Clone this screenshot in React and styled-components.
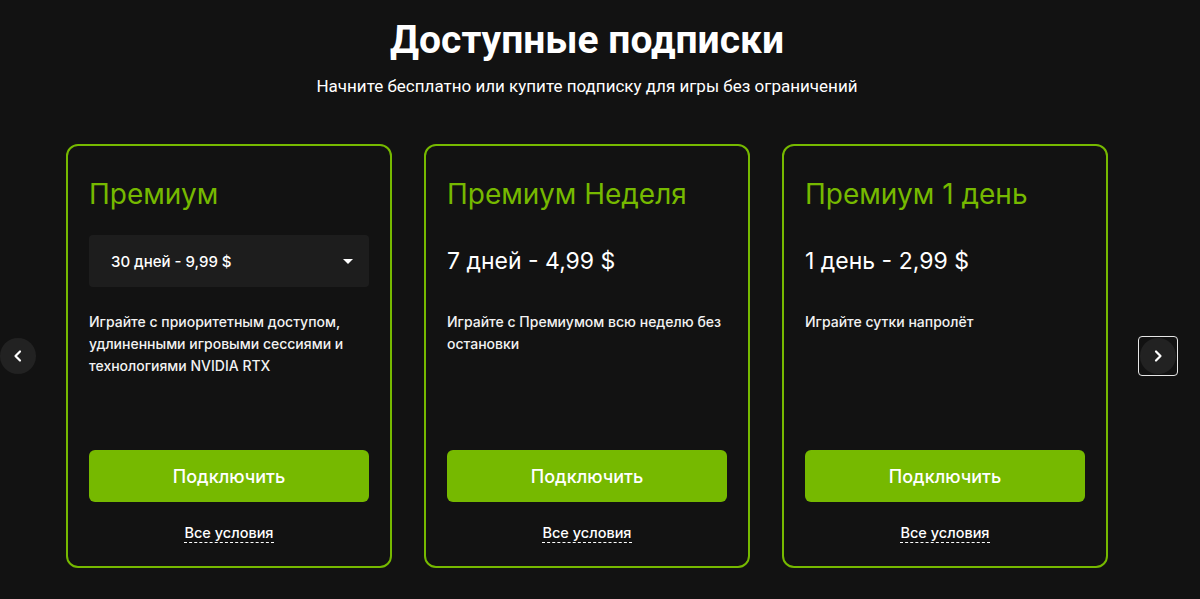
import React, { useState } from "react";
import styled, { createGlobalStyle } from "styled-components";

const GlobalStyle = createGlobalStyle`
  html, body {
    margin: 0;
    padding: 0;
    background: #121212;
  }
  body {
    font-family: Inter, "Noto Sans", "Liberation Sans", sans-serif;
    color: #fff;
  }
`;

const Page = styled.div`
  display: grid;
  grid-template-columns: 36px 1042px 40px;
  grid-template-rows: auto auto;
  align-content: start;
  align-items: center;
  column-gap: 30px;
  padding-top: 18px;
  height: 599px;
  box-sizing: border-box;
`;

const Header = styled.header`
  grid-column: 2;
  grid-row: 1;
  text-align: center;
  margin-bottom: 47px;
`;

const Title = styled.h2`
  margin: 0;
  font-family: Roboto, "Liberation Sans", sans-serif;
  font-weight: 700;
  font-size: 39px;
  line-height: 44px;
`;

const Subtitle = styled.p`
  margin: 13px 0 0;
  font-family: Roboto, "Liberation Sans", sans-serif;
  font-size: 17px;
  line-height: 22px;
`;

const Cards = styled.div`
  grid-column: 2;
  grid-row: 2;
  display: grid;
  grid-template-columns: repeat(3, 326px);
  gap: 32px;
`;

const Card = styled.div`
  display: flex;
  flex-direction: column;
  height: 424px;
  box-sizing: border-box;
  border: 2px solid #76b900;
  border-radius: 12px;
  padding: 30px 21px 23px;
`;

const PlanName = styled.h3`
  margin: 0;
  color: #76b900;
  font-weight: 400;
  font-size: 28px;
  line-height: 36px;
`;

const Select = styled.button`
  display: flex;
  align-items: center;
  justify-content: space-between;
  margin-top: 23px;
  height: 52px;
  padding: 0 16px 0 22px;
  background: #1d1d1d;
  border: none;
  border-radius: 4px;
  color: #fff;
  font-family: inherit;
  font-size: 15px;
  font-weight: 500;
  cursor: pointer;
`;

const Caret = styled.span`
  width: 0;
  height: 0;
  border-left: 5px solid transparent;
  border-right: 5px solid transparent;
  border-top: 5px solid #fff;
`;

const Price = styled.div`
  display: flex;
  align-items: center;
  margin-top: 23px;
  height: 52px;
  font-size: 23px;
  font-weight: 400;
`;

const Description = styled.p`
  flex: 1;
  margin: 24px 0 0;
  font-size: 14px;
  font-weight: 500;
  line-height: 22px;
  color: #f2f2f2;
`;

const ConnectButton = styled.button`
  height: 52px;
  border: none;
  border-radius: 6px;
  background: #76b900;
  color: #fff;
  font-family: inherit;
  font-size: 18px;
  font-weight: 500;
  cursor: pointer;
`;

const Terms = styled.a`
  align-self: center;
  margin-top: 22px;
  font-size: 14.5px;
  font-weight: 500;
  line-height: 18px;
  color: #fff;
  text-decoration: none;
  border-bottom: 1px dashed #fff;
  cursor: pointer;
`;

const ArrowButton = styled.button`
  grid-row: 2;
  grid-column: ${(props) => props.$col};
  display: flex;
  align-items: center;
  justify-content: center;
  width: ${(props) => (props.$focused ? "40px" : "36px")};
  height: ${(props) => (props.$focused ? "40px" : "36px")};
  padding: 0;
  background: transparent;
  border: ${(props) => (props.$focused ? "1.5px solid #e6e6e6" : "none")};
  border-radius: 4px;
  cursor: pointer;
`;

const ArrowCircle = styled.span`
  display: flex;
  align-items: center;
  justify-content: center;
  width: 36px;
  height: 36px;
  border-radius: 50%;
  background: #222;
`;

const Chevron = ({ dir }) => (
  <svg width="14" height="14" viewBox="0 0 14 14" fill="none">
    <path
      d={dir === "left" ? "M9 2.5 L4.5 7 L9 11.5" : "M5 2.5 L9.5 7 L5 11.5"}
      stroke="#fff"
      strokeWidth="2.2"
      strokeLinecap="round"
      strokeLinejoin="round"
    />
  </svg>
);

const plans = [
  {
    name: "Премиум",
    options: ["30 дней - 9,99 $"],
    text: "Играйте с приоритетным доступом, удлиненными игровыми сессиями и технологиями NVIDIA RTX",
  },
  {
    name: "Премиум Неделя",
    price: "7 дней - 4,99 $",
    text: "Играйте с Премиумом всю неделю без остановки",
  },
  {
    name: "Премиум 1 день",
    price: "1 день - 2,99 $",
    text: "Играйте сутки напролёт",
  },
];

function App() {
  const [selected] = useState(0);

  return (
    <>
      <GlobalStyle />
      <Page>
        <Header>
          <Title>Доступные подписки</Title>
          <Subtitle>Начните бесплатно или купите подписку для игры без ограничений</Subtitle>
        </Header>

        <ArrowButton $col={1} aria-label="Назад">
          <ArrowCircle>
            <Chevron dir="left" />
          </ArrowCircle>
        </ArrowButton>

        <Cards>
          {plans.map((p, i) => (
            <Card key={i}>
              <PlanName>{p.name}</PlanName>
              {p.options ? (
                <Select>
                  {p.options[selected]}
                  <Caret />
                </Select>
              ) : (
                <Price>{p.price}</Price>
              )}
              <Description>{p.text}</Description>
              <ConnectButton>Подключить</ConnectButton>
              <Terms>Все условия</Terms>
            </Card>
          ))}
        </Cards>

        <ArrowButton $col={3} $focused aria-label="Вперёд">
          <ArrowCircle>
            <Chevron dir="right" />
          </ArrowCircle>
        </ArrowButton>
      </Page>
    </>
  );
}

export default App;
